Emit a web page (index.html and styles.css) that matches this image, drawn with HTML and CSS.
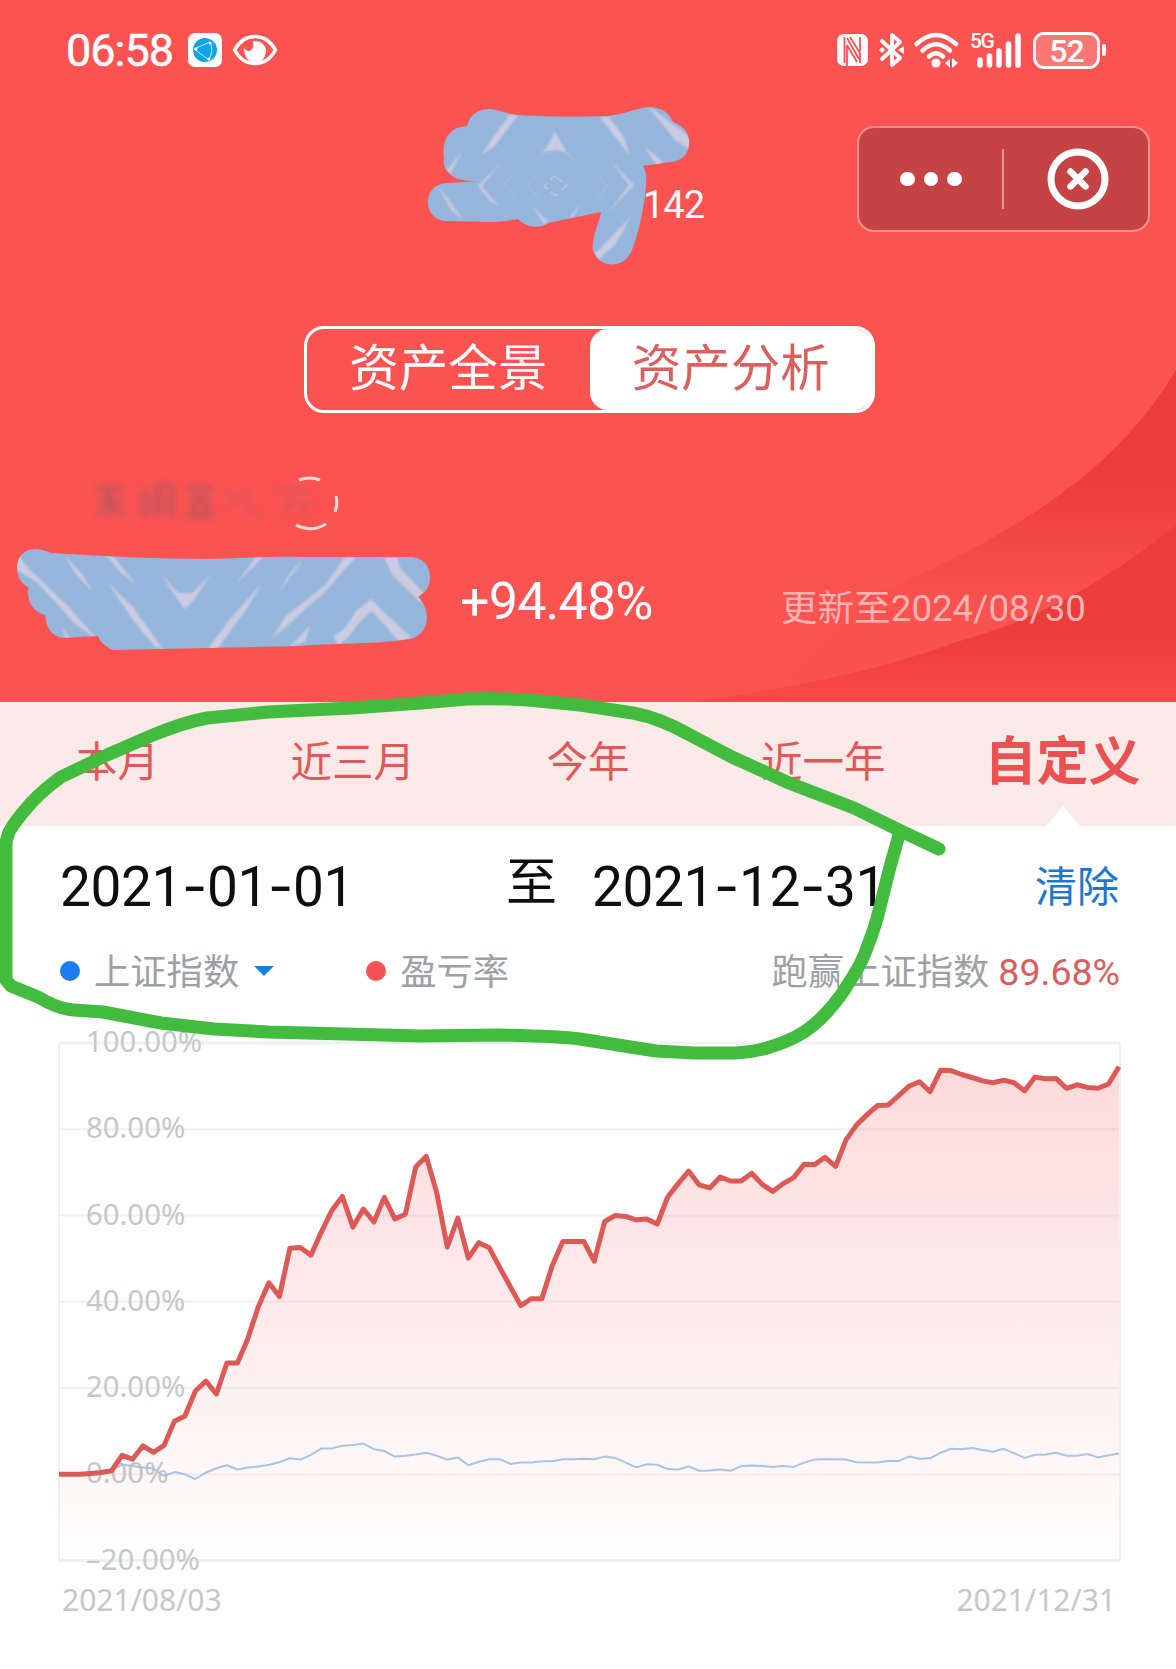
FILE: index.html
```
<!DOCTYPE html>
<html lang="zh-CN">
<head>
    <meta charset="UTF-8">
    <title>资产分析</title>
    <link rel="stylesheet" href="styles.css">
</head>
<body>
    <div class="page">
        <header class="header">
            <svg class="header-bg" viewBox="0 0 1176 702">
                <defs>
                    <linearGradient id="arc1" gradientUnits="userSpaceOnUse" x1="0" y1="480" x2="0" y2="600">
                        <stop offset="0" stop-color="#ec3c3b"/>
                        <stop offset="1" stop-color="#f95251"/>
                    </linearGradient>
                    <linearGradient id="arc2" gradientUnits="userSpaceOnUse" x1="0" y1="630" x2="0" y2="702">
                        <stop offset="0" stop-color="#ec3c3b"/>
                        <stop offset="1" stop-color="#f84b4a"/>
                    </linearGradient>
                </defs>
                <path d="M1176 370Q1126 455 1027 517Q960 560 860 600L760 702H1176Z" fill="url(#arc1)"/>
                <path d="M1176 525Q1070 612 956 642Q890 668 770 690L690 702H1176Z" fill="url(#arc2)"/>
            </svg>

            <div class="status-bar">
                <div class="status-left">
                    <span class="time">06:58</span>
                    <svg class="icon-app" width="34" height="34" viewBox="0 0 34 34">
                        <rect width="34" height="34" rx="7" fill="#fff"/>
                        <circle cx="17" cy="17" r="12" fill="#0fa4e6"/>
                        <path d="M6 16L22 9Q26 17 21 27Z" fill="none" stroke="#c5edfc" stroke-width="1"/>
                        <g fill="#fff"><circle cx="8" cy="16" r="1.500"/><circle cx="22" cy="10" r="1.500"/><circle cx="21" cy="26" r="1.500"/></g>
                    </svg>
                    <svg class="icon-eye" width="46" height="32" viewBox="0 0 46 32">
                        <path d="M2.500 16Q10 2.500 23 2.500T43.500 16Q36 29.500 23 29.500T2.500 16Z" fill="none" stroke="#fff" stroke-width="3.500"/>
                        <path d="M21 7Q34 7 34 18Q32 29 23 29Q12 27 12 14Q16 19 19 16Q22 14 21 7Z" fill="#fff"/>
                    </svg>
                </div>
                <div class="status-right">
                    <svg width="31" height="32" viewBox="0 0 31 32">
                        <rect width="31" height="32" rx="7" fill="#fff"/>
                        <path d="M7.500 3V29M10 4L22 25M10 11V32M10 11L20 28M13 3L23 19V29M23 3V17" fill="none" stroke="#fa5252" stroke-width="1.800"/>
                    </svg>
                    <svg class="icon-bt" width="26" height="36" viewBox="0 0 26 36">
                        <path d="M3 9L21 26L13 33V3L21 10L3 27" fill="none" stroke="#fff" stroke-width="3.800" stroke-linejoin="round" stroke-linecap="round"/>
                        <path d="M0 18L3 15L6 18L3 21ZM19 18L25 14V22Z" fill="#fff"/>
                    </svg>
                    <svg class="icon-wifi" width="46" height="36" viewBox="0 0 46 36">
                        <g fill="none" stroke="#fff" stroke-width="4.500" stroke-linecap="round">
                            <path d="M2.500 12Q22 -6 42 12"/>
                            <path d="M8.500 18.500Q22 6 36 18.500"/>
                            <path d="M15 24.500Q22 18 29 24.500"/>
                        </g>
                        <circle cx="22" cy="31" r="4.500" fill="#fff"/>
                        <path d="M36 27V36L31 31ZM38 26L44 31L38 36Z" fill="#fff"/>
                    </svg>
                    <div class="signal">
                        <span class="signal-type">5G</span>
                        <svg width="44" height="36" viewBox="0 0 44 36">
                            <path d="M3 28V33M12.500 24V33M22 19V33M31.500 12V33M41 4V33" stroke="#fff" stroke-width="5.500" stroke-linecap="round"/>
                        </svg>
                    </div>
                    <div class="battery">52</div>
                    <span class="battery-tip"></span>
                </div>
            </div>

            <div class="nav">
                <span class="account">142</span>
                <div class="capsule">
                    <div class="dots"><i></i><i></i><i></i></div>
                    <span class="capsule-line"></span>
                    <svg class="icon-close" width="62" height="62" viewBox="0 0 62 62">
                        <circle cx="31" cy="31" r="27" fill="none" stroke="#fff" stroke-width="7"/>
                        <path d="M23.500 23.500L38.500 38.500M38.500 23.500L23.500 38.500" stroke="#fff" stroke-width="6.500" stroke-linecap="round"/>
                    </svg>
                </div>
            </div>

            <div class="switch">
                <span class="switch-item">资产全景</span>
                <span class="switch-item active">资产分析</span>
            </div>

            <div class="summary">
                <span class="rate">+94.48%</span>
                <span class="updated">更新至2024/08/30</span>
            </div>
        </header>

        <nav class="tabs">
            <span class="tab">本月</span>
            <span class="tab">近三月</span>
            <span class="tab">今年</span>
            <span class="tab">近一年</span>
            <span class="tab selected">自定义</span>
        </nav>

        <div class="dates">
            <span class="date date-from">2021<i>-</i>01<i>-</i>01</span>
            <span class="date-to-label">至</span>
            <span class="date">2021<i>-</i>12<i>-</i>31</span>
            <span class="clear">清除</span>
        </div>

        <div class="legend">
            <i class="dot blue"></i>
            <span class="legend-text">上证指数</span>
            <i class="caret"></i>
            <i class="dot red"></i>
            <span class="legend-text">盈亏率</span>
            <span class="legend-text beat">跑赢上证指数 <b>89.68%</b></span>
        </div>

        <div class="chart">
            <svg id="chart" width="1062" height="520" viewBox="0 0 1062 520">
                <defs>
                    <linearGradient id="area" gradientUnits="userSpaceOnUse" x1="0" y1="0" x2="0" y2="518">
                        <stop offset="0" stop-color="#fa5252" stop-opacity=".22"/>
                        <stop offset=".5" stop-color="#fa5252" stop-opacity=".115"/>
                        <stop offset="1" stop-color="#fa5252" stop-opacity="0"/>
                    </linearGradient>
                </defs>
                <g id="grid"></g>
                <path id="profit-area" fill="url(#area)"/>
                <path id="index-line" class="index-line"/>
                <path id="profit-line" class="profit-line"/>
            </svg>
            <div class="chart-dates">
                <span>2021/08/03</span>
                <span>2021/12/31</span>
            </div>
        </div>

        <!-- brush marks over the page -->
        <svg class="marks" width="1176" height="1669" viewBox="0 0 1176 1669">
            <defs>
                <filter id="soft" x="-10%" y="-30%" width="120%" height="160%"><feGaussianBlur stdDeviation="3"/></filter>
                <filter id="streak"><feGaussianBlur stdDeviation="0.800"/></filter>
                <clipPath id="blob1">
                    <path id="blob1-shape" d="M444 159C441 138 451 127 467 126C470 113 480 109 490 109C501 110 506 114 518 115C548 117 580 117 608 116C630 113 636 108 650 107C663 108 669 113 673 122C684 126 690 134 689 144C688 155 682 161 670 162L643 166C648 174 646 184 645 195C643 213 638 235 632 250C627 262 617 266 608 264C597 262 591 252 593 243C594 232 599 223 601 212L548 223C541 229 526 228 518 219C500 223 480 222 446 221C434 220 427 211 428 201C429 189 437 183 448 183L478 181C464 181 455 180 450 174C445 170 443 165 444 159Z"/>
                </clipPath>
                <clipPath id="blob2">
                    <path id="blob2-shape" d="M17 568C17 556 25 549 36 549C43 549 47 552 52 553C100 556 160 559 210 559C240 558 270 556 300 557L412 557C423 558 430 566 430 577C430 588 425 592 418 597C424 602 427 611 427 619C426 630 419 637 410 639C370 645 330 643 300 646L112 650C104 645 100 642 98 636L62 638C53 636 48 630 46 621L45 615C35 612 29 605 28 594C28 590 29 589 28 587C21 583 17 577 17 568Z"/>
                </clipPath>
            </defs>

            <g class="smudge" filter="url(#soft)">
                <path d="M96 488H124M98 500H124M110 484V518M98 516L110 502L124 516M104 492L118 510"/>
                <path d="M144 488V518M152 486H172V518M146 500H172M146 510H170M158 488V516"/>
                <path d="M186 488H212M190 496L212 506M210 490L190 508M186 516H214M194 506V516M206 506V516"/>
                <path d="M228 496H244M226 508L240 498M250 488V514M250 514H262" opacity=".4"/>
                <path d="M274 490H306M280 504H316M294 490L286 516M304 500V516" opacity=".4"/>
            </g>
            <path d="M299 480Q310 476 320 480M296 525Q311 533 326 524M336 496Q338 504 335 512" fill="none" stroke="#ffdcd8" stroke-width="3"/>

            <use href="#blob1-shape" fill="#95b5da"/>
            <g clip-path="url(#blob1)">
                <g class="streaks" filter="url(#streak)">
                    <path d="M509 115H518L495 146L481 155ZM600 117H609L624 137L630 156Z"/>
                    <path d="M555 132L565 149L578 166L566 152L556 150L544 152L533 167L546 148Z"/>
                    <path d="M647 105L657 112L692 139V151L675 140Z"/>
                    <path d="M447 170L463 150L450 174ZM644 146L664 163L657 166Z"/>
                    <path d="M478 186L502 161L486 181L482 187L499 206L489 200Z"/>
                    <path d="M610 160L634 185L608 213L629 185ZM437 186L450 201L463 220L452 211Z"/>
                    <path d="M533 206L548 222L543 223ZM580 205L570 216L573 217ZM632 215L615 245L599 259L595 254Z"/>
                </g>
                <path d="M554 176L567 185L556 196L544 186Z" fill="none" stroke="#b7c5e0" stroke-width="1.500" stroke-dasharray="10 4"/>
                <path d="M540 174L527 185L540 199M596 172L607 186L597 199M512 176L504 184L515 198" fill="none" stroke="#a2b9dc" stroke-width="1.500"/>
            </g>

            <use href="#blob2-shape" fill="#95b5da"/>
            <g clip-path="url(#blob2)">
                <g class="streaks" filter="url(#streak)">
                    <path d="M16 552L28 568L66 604L98 640L75 624L38 583L17 570Z"/>
                    <path d="M64 555L82 574L93 592L78 577ZM105 554L115 558L136 585L119 571Z"/>
                    <path d="M160 573L178 593H192L210 575L194 600L185 609L178 600Z"/>
                    <path d="M108 583L133 607L163 649L155 647L133 620Z"/>
                    <path d="M262 583L248 607L218 648L207 650L230 619ZM263 557L235 585L256 557Z"/>
                    <path d="M305 557L277 595L290 573ZM345 557H356L325 592L272 639L285 617L325 585Z"/>
                    <path d="M384 557H397L400 568L426 595L420 602L392 575Z"/>
                    <path d="M371 599L388 616L412 638L398 641L385 625L371 611L359 623L350 635L339 645L333 637L345 628L356 611Z"/>
                    <path d="M310 626L288 648L305 642ZM62 627L72 640L66 640Z"/>
                </g>
            </g>

            <path class="pen" d="M939 849L903 832L854 808L789 783L732 757L690 735Q660 718 633 713L580 705L528 700Q498 698 467 699L421 703L352 708L268 712L207 718Q185 722 153 735L107 755L61 777Q43 790 31 803Q15 821 9 832L6 842V980L11 986L38 997Q58 1009 73 1010L103 1012L161 1023L214 1029L268 1032L421 1036L497 1035Q560 1036 580 1039L656 1051L694 1053H736Q755 1052 770 1047Q790 1041 804 1032Q815 1025 827 1012Q840 998 850 981Q860 966 865 953Q876 925 880 907L890 867L899 835"/>
        </svg>
    </div>

    <script>
        const profit = [
            0, 0, 0, 0.2, 0.4, 0.8, 4.4, 3.5, 6.6, 5.1, 6.7, 12.3, 13.5, 19.3, 21.6, 18.6, 25.8, 25.8, 31.5, 38.9,
            44.4, 41.2, 52.4, 52.6, 50.8, 56.2, 61.2, 64.4, 57.3, 61.5, 58.5, 64.2, 59.2, 60.3, 71.3, 73.7, 65.2, 52.7, 59.4, 50.1,
            53.7, 52.5, 47.9, 43.5, 39.1, 40.7, 40.7, 48.4, 54, 54, 54, 49.4, 58.6, 60, 59.8, 59, 59.2, 58, 64.3, 67.4,
            70.3, 67.1, 66.4, 68.9, 68, 68, 69.8, 67.2, 65.6, 67.4, 68.8, 71.9, 71.8, 73.5, 71.4, 77.6, 81, 83.4, 85.5, 85.6,
            87.8, 90, 91, 88.7, 93.7, 93.6, 92.7, 92, 91.2, 90.8, 91.4, 90.8, 88.9, 92.1, 91.7, 91.8, 89.5, 90.3, 89.7, 89.5,
            90.5, 94.48
        ];
        const index = [
            0, 0, 0, 0, 0.2, 1, 2.2, 1.9, 1.6, 1.3, -0.4, 0.5, 0, -1.1, 0.4, 1.4, 2.1, 1.1, 1.6, 1.8,
            2.2, 2.8, 3.7, 3.4, 4.5, 6, 6, 6.6, 6.8, 7.1, 5.8, 5.4, 4.1, 4.3, 4.6, 5, 4.3, 3.4, 3.9, 2.1,
            2.9, 3.5, 3.5, 2.4, 2.7, 2.7, 3, 3, 3.5, 3.5, 3.6, 3.5, 4.1, 3.8, 2.7, 1.6, 2.3, 2.2, 1.2, 1.1,
            1.8, 0.8, 0.9, 1.1, 0.8, 1.9, 2, 1.9, 1.7, 1.9, 1.7, 2.7, 3.4, 3.5, 3.5, 3.4, 2.8, 2.7, 2.7, 3.1,
            3.1, 4.1, 3.6, 3.7, 5, 5.9, 5.8, 6.1, 5.6, 5.2, 5.9, 4.9, 3.8, 4.5, 4.6, 5, 4.3, 4.3, 4.7, 3.9,
            4.4, 4.8
        ];

        const width = 1060;
        const y = value => 1 + (100 - value) * 517.5 / 120;

        function linePath(values) {
            const step = width / (values.length - 1);
            return "M" + values.map((v, i) => `${(1 + i * step).toFixed(1)} ${y(v).toFixed(1)}`).join("L");
        }

        let grid = "";
        for (let v = 100; v >= -20; v -= 20) {
            const edge = v === 100 || v === -20;
            grid += `<path class="grid-line${edge ? " edge" : ""}" d="M0 ${y(v)}H1062"/>`;
            grid += `<text class="grid-label" x="28" y="${y(v) + 9}">${v.toFixed(2).replace("-", "–")}%</text>`;
        }
        grid += `<path class="grid-line" d="M1 1V518M1062 1V518"/>`;

        document.getElementById("grid").innerHTML = grid;
        document.getElementById("profit-line").setAttribute("d", linePath(profit));
        document.getElementById("index-line").setAttribute("d", linePath(index));
        document.getElementById("profit-area").setAttribute("d", linePath(profit) + `V${y(-20)}H1Z`);
    </script>
</body>
</html>
```
FILE: styles.css
```
* {
    box-sizing: border-box;
}

body {
    margin: 0;
    background-color: #fefefe;
    font-family: Roboto, "Noto Sans CJK SC", sans-serif;
}

.page {
    position: relative;
    width: 1176px;
    height: 1669px;
    overflow: hidden;
}

.header {
    position: relative;
    height: 702px;
    background-color: #fa5352;
    color: #fff;
}

.header-bg {
    position: absolute;
    top: 0;
    left: 0;
    width: 100%;
    height: 100%;
}

.header > div {
    position: relative;
}

/* status bar */
.status-bar {
    display: flex;
    justify-content: space-between;
    height: 100px;
    padding: 0 70px 0 66px;
}

.status-left,
.status-right {
    display: flex;
    align-items: center;
}

.time {
    width: 122px;
    font-size: 45px;
    letter-spacing: -1px;
    font-weight: 400;
    -webkit-text-stroke: 0.5px #fff;
}

.icon-eye {
    margin-left: 10px;
}

.icon-bt {
    margin-left: 11px;
}

.icon-wifi {
    margin-left: 9px;
}

.signal {
    position: relative;
    display: flex;
    margin-left: 17px;
}

.signal-type {
    position: absolute;
    top: 0;
    left: -7px;
    font-size: 21px;
    line-height: 18px;
    font-weight: 500;
    letter-spacing: -1.500px;
}

.battery {
    width: 67px;
    height: 37px;
    margin-left: 12px;
    border: 3px solid #fff;
    border-radius: 11px;
    background-color: #fb7775;
    font-size: 32px;
    line-height: 33px;
    font-weight: 500;
    letter-spacing: -1px;
    text-align: center;
}

.battery-tip {
    width: 4px;
    height: 12px;
    margin-left: 2px;
    border-radius: 2px;
    background-color: #fff;
}

/* title row */
.nav {
    display: flex;
    justify-content: flex-end;
    padding: 26px 26px 0 0;
}

.account {
    margin: 56px 153px 0 0;
    font-size: 38px;
    line-height: 46px;
    letter-spacing: -1px;
}

.capsule {
    display: flex;
    align-items: center;
    width: 293px;
    height: 106px;
    padding-left: 41px;
    border: 2px solid #fb8f8b;
    border-radius: 17px;
    background-color: #c64345;
}

.dots {
    display: flex;
    gap: 9px;
}

.dots i {
    width: 14.500px;
    height: 14.500px;
    border-radius: 50%;
    background-color: #fff;
}

.capsule-line {
    width: 2px;
    height: 60px;
    margin: 0 43px 0 40px;
    background-color: #e79592;
}

.switch {
    display: flex;
    width: 571px;
    height: 87px;
    margin: 94px 0 0 304px;
    border: 3px solid #fff;
    border-radius: 20px;
}

.switch-item {
    flex: 1;
    font-size: 49.500px;
    line-height: 81px;
    height: 81px;
    padding-bottom: 1px;
    text-align: center;
}

.switch-item.active {
    border-radius: 18px;
    background-color: #fff;
    box-shadow: 2px 0 0 -1px #fff;
    color: #d9605f;
}

.summary {
    display: flex;
    align-items: center;
    justify-content: space-between;
    margin: 148px 90px 0 460px;
    height: 80px;
}

.rate {
    font-size: 52px;
    letter-spacing: -0.800px;
}

.updated {
    margin-top: 7px;
    color: #fdb3b0;
    font-size: 36.700px;
}

/* period tabs */
.tabs {
    display: grid;
    grid-template-columns: repeat(5, 1fr);
    height: 124px;
    background-color: #f9e9e7;
    color: #e0595a;
    line-height: 122px;
    text-align: center;
    font-size: 41.500px;
}

.tab.selected {
    position: relative;
    left: 4px;
    color: #ea5153;
    font-size: 52px;
    font-weight: bold;
}

.tab.selected::after {
    content: "";
    position: absolute;
    left: 101px;
    bottom: 0;
    border: 17px solid transparent;
    border-top: 0;
    border-bottom: 20px solid #fefefe;
}

/* date range */
.dates {
    display: flex;
    align-items: center;
    height: 118px;
    padding: 0 57px 0 60px;
    color: #0d0e10;
    font-size: 55px;
}

.date {
    padding-top: 3px;
    letter-spacing: -0.400px;
    line-height: 60px;
}

.date i {
    font-family: Inter, sans-serif;
    font-style: normal;
}

.date-from {
    width: 446px;
}

.date-to-label {
    width: 86px;
    font-size: 51px;
    line-height: 60px;
    padding-bottom: 4px;
}

.clear {
    margin-left: auto;
    padding-bottom: 3px;
    color: #1d76cf;
    font-size: 42px;
}

/* legend */
.legend {
    display: flex;
    align-items: center;
    height: 54px;
    padding: 0 56px 0 60px;
    color: #9da1a5;
    font-size: 36.300px;
    white-space: nowrap;
}

.legend-text {
    padding-bottom: 4px;
}

.dot {
    width: 20px;
    height: 20px;
    margin-right: 14px;
    border-radius: 50%;
}

.dot.blue {
    background-color: #1c7cf2;
}

.dot.red {
    margin-left: 92px;
    background-color: #f55355;
}

.caret {
    margin-left: 15px;
    border: 10px solid transparent;
    border-top: 10px solid #1c7cdf;
    border-bottom: 0;
}

.beat {
    margin-left: auto;
}

.beat b {
    color: #d85f5d;
    font-size: 37.500px;
    font-weight: normal;
}

/* chart */
.chart {
    padding: 44px 0 0 58px;
}

.chart svg {
    display: block;
    overflow: visible;
}

.grid-line {
    fill: none;
    stroke: #f0f0f1;
    stroke-width: 2;
}

.grid-line.edge {
    stroke-width: 3;
}

.grid-label {
    fill: #c5c8ca;
    font-family: "Noto Sans", sans-serif;
    font-size: 29.300px;
}

.profit-line {
    fill: none;
    stroke: #db5a58;
    stroke-width: 5;
    stroke-linejoin: round;
}

.index-line {
    fill: none;
    stroke: #a9c3e6;
    stroke-width: 2;
    stroke-linejoin: round;
}

.chart-dates {
    display: flex;
    justify-content: space-between;
    padding: 18px 60px 0 4px;
    color: #c5c8ca;
    font-family: "Noto Sans", sans-serif;
    font-size: 30px;
    line-height: 40px;
}

/* brush marks */
.marks {
    position: absolute;
    top: 0;
    left: 0;
}

.smudge path {
    fill: none;
    stroke: #c9555a;
    stroke-width: 5;
}

.streaks path {
    fill: #dfd6e6;
    opacity: .7;
}

.pen {
    fill: none;
    stroke: #42bb3f;
    stroke-width: 13;
    stroke-linecap: round;
    stroke-linejoin: round;
}
```
